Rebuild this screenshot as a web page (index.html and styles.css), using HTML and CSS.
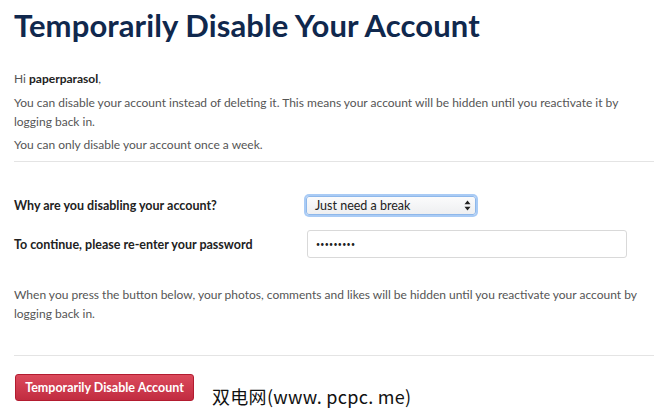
FILE: index.html
```html
<!DOCTYPE html>
<html lang="en">
<head>
<meta charset="utf-8">
<title>Temporarily Disable Your Account</title>
<link rel="stylesheet" href="styles.css">
</head>
<body>
<main class="page">
  <h1 class="title">Temporarily Disable Your Account</h1>
  <section class="intro">
    <p class="text text-hi">Hi <strong>paperparasol</strong>,</p>
    <p class="text">You can disable your account instead of deleting it. This means your account will be hidden until you reactivate it by logging back in.</p>
    <p class="text">You can only disable your account once a week.</p>
  </section>
  <hr class="rule">
  <form class="form">
    <div class="row">
      <label class="label">Why are you disabling your account?</label>
      <div class="select">
        <span class="select-value">Just need a break</span>
        <svg class="select-arrows" width="7" height="11" viewBox="0 0 7 11"><path d="M3.5 0.5 L6.5 4.2 H0.5 Z M3.5 10.5 L6.5 6.8 H0.5 Z" fill="#222"/></svg>
      </div>
    </div>
    <div class="row">
      <label class="label">To continue, please re-enter your password</label>
      <div class="input"><span class="dots">•••••••••</span></div>
    </div>
  </form>
  <p class="text note">When you press the button below, your photos, comments and likes will be hidden until you reactivate your account by logging back in.</p>
  <hr class="rule rule-low">
  <div class="actions">
    <button type="button" class="btn">Temporarily Disable Account</button>
    <span class="watermark">双电网(www. pcpc. me)</span>
  </div>
</main>
</body>
</html>
```
FILE: styles.css
```css
html, body {
  margin: 0;
  padding: 0;
  background: #fff;
}
body {
  font-family: "Lato", "Open Sans", sans-serif;
  color: #555;
  min-height: 420px;
}
.page {
  width: 640px;
  padding: 0 0 19px 14px;
}
.title {
  margin: 0;
  padding-top: 6px;
  font-size: 31px;
  line-height: 38px;
  font-weight: 700;
  color: #10284d;
  letter-spacing: 0.1px;
}
.intro {
  margin-top: 25px;
}
.text {
  margin: 0 0 4px;
  font-size: 12px;
  line-height: 19px;
  color: #555;
}
.text-hi {
  margin-bottom: 5px;
}
.text strong {
  color: #222;
  font-weight: 700;
}
.rule {
  border: 0;
  border-top: 1px solid #e4e4e4;
  margin: 7px 0 0;
}
.form {
  margin-top: 34px;
  display: flex;
  flex-direction: column;
  gap: 15px;
}
.row {
  display: grid;
  grid-template-columns: 292px 1fr;
  align-items: center;
}
.label {
  font-size: 12.5px;
  font-weight: 700;
  color: #222;
}
.select {
  width: 156px;
  height: 17px;
  border: 1px solid #8fb8ea;
  box-shadow: 0 0 0 2px #a9cbf5;
  border-radius: 3px;
  background: linear-gradient(#fbfbfc, #eeeff1);
  display: flex;
  align-items: center;
  justify-content: space-between;
  padding: 0 4px 0 8px;
  box-sizing: content-box;
  font-size: 12.5px;
  color: #222;
}
.select-arrows {
  display: block;
}
.input {
  width: 320px;
  height: 28px;
  border: 1px solid #d9d9d9;
  border-radius: 3px;
  display: flex;
  align-items: center;
  padding-left: 8px;
  box-sizing: border-box;
  margin-left: 1px;
}
.dots {
  font-size: 7px;
  letter-spacing: 0.3px;
  color: #222;
}
.note {
  margin-top: 27px;
}
.rule-low {
  margin-top: 32px;
}
.actions {
  position: relative;
  margin-top: 18px;
}
.btn {
  display: block;
  width: 179px;
  height: 27px;
  margin-left: 1px;
  border: 1px solid #b31c30;
  border-radius: 3px;
  background: linear-gradient(#dc4a5c, #c12c40);
  color: #fff;
  font-family: "Lato", sans-serif;
  font-size: 12.5px;
  font-weight: 700;
  padding: 0;
  cursor: pointer;
}
.watermark {
  position: absolute;
  left: 198px;
  top: 11px;
  font-family: "Noto Sans CJK SC", sans-serif;
  font-size: 18px;
  line-height: 22px;
  color: #111;
  letter-spacing: 0.3px;
}
```
